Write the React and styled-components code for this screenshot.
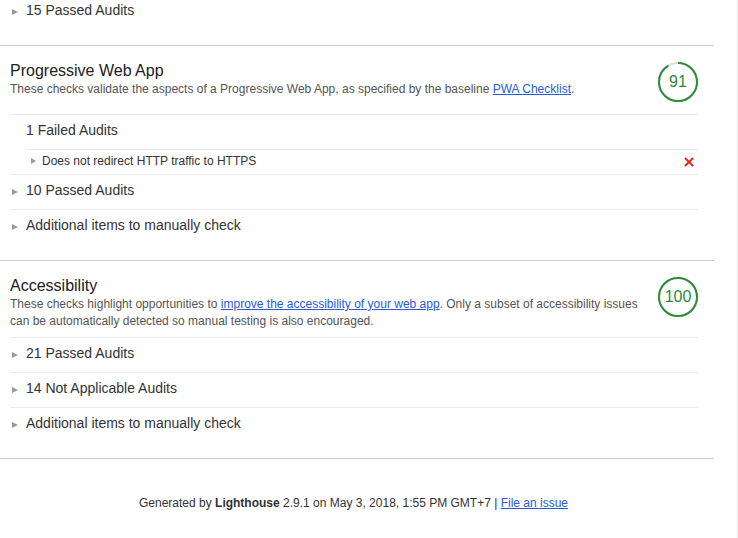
import React from "react";
import styled, { createGlobalStyle } from "styled-components";

const GlobalStyle = createGlobalStyle`
  html, body {
    margin: 0;
    padding: 0;
    background: #fff;
  }
  body {
    font-family: "Liberation Sans", Arial, sans-serif;
    color: #212121;
  }
`;

const Page = styled.div`
  width: 738px;
  height: 538px;
  box-sizing: border-box;
  border-right: 1px solid #ececec;
  overflow: hidden;
`;

const Report = styled.div`
  width: 714px;
  margin-top: -5px;
`;

const Category = styled.section`
  padding: ${(p) => (p.$partial ? "0" : "15px")} 16px 16px 10px;
  border-bottom: 1px solid #ccc;
`;

const Header = styled.div`
  display: flex;
  align-items: flex-start;
  justify-content: space-between;
`;

const HeaderText = styled.div`
  flex: 1;
  margin-bottom: 7px;
  padding-right: 12px;
`;

const Title = styled.h2`
  margin: 0;
  font-size: 16px;
  font-weight: normal;
  line-height: 20px;
  color: #212121;
`;

const Description = styled.p`
  margin: 0;
  font-size: 12px;
  line-height: 17px;
  color: #555;
`;

const Link = styled.a`
  color: #2a5bd7;
  text-decoration: underline;
`;

const Gauge = styled.div`
  position: relative;
  width: 40px;
  height: 40px;
  margin: 1px 0 12px 0;
  flex-shrink: 0;
`;

const GaugeValue = styled.span`
  position: absolute;
  inset: 0;
  display: flex;
  align-items: center;
  justify-content: center;
  font-size: 16px;
  color: #2e8b37;
`;

const Group = styled.div`
  border-top: 1px solid #ebebeb;
`;

const Row = styled.div`
  display: flex;
  align-items: center;
  box-sizing: border-box;
  height: 34px;
  padding-bottom: 4px;
  font-size: 14px;
  color: #333;
  padding-left: ${(p) => (p.$plain ? "16px" : "2px")};
`;

const Arrow = styled.span`
  display: inline-block;
  width: 0;
  height: 0;
  border-top: 3.5px solid transparent;
  border-bottom: 3.5px solid transparent;
  border-left: 6px solid #999;
  margin: 3px 8px 0 0;
`;

const AuditList = styled.div`
  margin-left: 16px;
`;

const Audit = styled.div`
  display: flex;
  align-items: center;
  justify-content: space-between;
  box-sizing: border-box;
  height: 25px;
  padding: 0 4px 3px 5px;
  border-top: 1px solid #ebebeb;
  font-size: 12px;
  color: #333;
`;

const AuditLabel = styled.span`
  display: flex;
  align-items: center;
`;

const SmallArrow = styled(Arrow)`
  border-top-width: 3px;
  border-bottom-width: 3px;
  border-left-width: 5px;
  margin: 1px 6px 0 0;
`;

const FailMark = styled.svg`
  margin-top: 3px;
`;

const Footer = styled.footer`
  text-align: center;
  font-size: 12px;
  color: #333;
  padding: 37px 7px 0 0;
`;

function ScoreGauge({ score }) {
  const r = 19;
  const c = 2 * Math.PI * r;
  return (
    <Gauge>
      <svg width="40" height="40" viewBox="0 0 40 40">
        <circle cx="20" cy="20" r={r} fill="none" stroke="#ddd" strokeWidth="2" />
        <circle
          cx="20"
          cy="20"
          r={r}
          fill="none"
          stroke="#2e8b37"
          strokeWidth="2"
          strokeDasharray={`${(c * score) / 100} ${c}`}
          transform="rotate(-90 20 20)"
        />
      </svg>
      <GaugeValue>{score}</GaugeValue>
    </Gauge>
  );
}

function FailIcon() {
  return (
    <FailMark width="10" height="10" viewBox="0 0 10 10">
      <path d="M1 1 L9 9 M9 1 L1 9" stroke="#e8231a" strokeWidth="1.8" />
    </FailMark>
  );
}

function Collapsed({ children }) {
  return (
    <Row>
      <Arrow />
      {children}
    </Row>
  );
}

export default function App() {
  return (
    <Page>
      <GlobalStyle />
      <Report>
        <Category $partial>
          <Collapsed>15 Passed Audits</Collapsed>
        </Category>

        <Category>
          <Header>
            <HeaderText>
              <Title>Progressive Web App</Title>
              <Description>
                These checks validate the aspects of a Progressive Web App, as specified by the
                baseline <Link href="#">PWA Checklist</Link>.
              </Description>
            </HeaderText>
            <ScoreGauge score={91} />
          </Header>
          <Group>
            <Row $plain>1 Failed Audits</Row>
            <AuditList>
              <Audit>
                <AuditLabel>
                  <SmallArrow />
                  Does not redirect HTTP traffic to HTTPS
                </AuditLabel>
                <FailIcon />
              </Audit>
            </AuditList>
          </Group>
          <Group>
            <Collapsed>10 Passed Audits</Collapsed>
          </Group>
          <Group>
            <Collapsed>Additional items to manually check</Collapsed>
          </Group>
        </Category>

        <Category>
          <Header>
            <HeaderText>
              <Title>Accessibility</Title>
              <Description>
                These checks highlight opportunities to{" "}
                <Link href="#">improve the accessibility of your web app</Link>. Only a subset of
                accessibility issues can be automatically detected so manual testing is also
                encouraged.
              </Description>
            </HeaderText>
            <ScoreGauge score={100} />
          </Header>
          <Group>
            <Collapsed>21 Passed Audits</Collapsed>
          </Group>
          <Group>
            <Collapsed>14 Not Applicable Audits</Collapsed>
          </Group>
          <Group>
            <Collapsed>Additional items to manually check</Collapsed>
          </Group>
        </Category>

        <Footer>
          Generated by <b>Lighthouse</b> 2.9.1 on May 3, 2018, 1:55 PM GMT+7 |{" "}
          <Link href="#">File an issue</Link>
        </Footer>
      </Report>
    </Page>
  );
}
